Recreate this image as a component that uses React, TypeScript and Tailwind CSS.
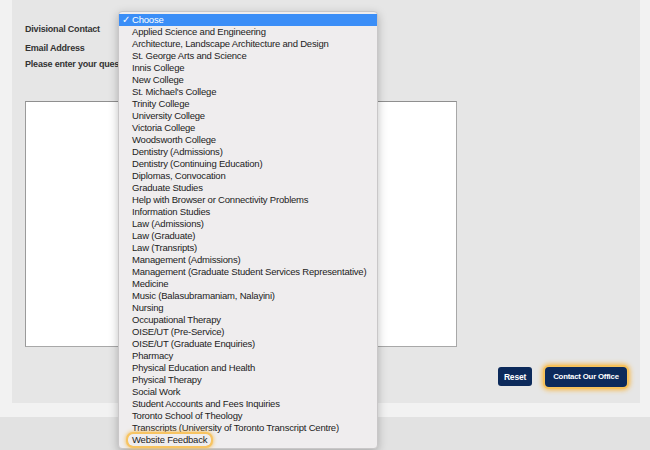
import React from "react";

const options = [
  "Applied Science and Engineering",
  "Architecture, Landscape Architecture and Design",
  "St. George Arts and Science",
  "Innis College",
  "New College",
  "St. Michael's College",
  "Trinity College",
  "University College",
  "Victoria College",
  "Woodsworth College",
  "Dentistry (Admissions)",
  "Dentistry (Continuing Education)",
  "Diplomas, Convocation",
  "Graduate Studies",
  "Help with Browser or Connectivity Problems",
  "Information Studies",
  "Law (Admissions)",
  "Law (Graduate)",
  "Law (Transripts)",
  "Management (Admissions)",
  "Management (Graduate Student Services Representative)",
  "Medicine",
  "Music (Balasubramaniam, Nalayini)",
  "Nursing",
  "Occupational Therapy",
  "OISE/UT (Pre-Service)",
  "OISE/UT (Graduate Enquiries)",
  "Pharmacy",
  "Physical Education and Health",
  "Physical Therapy",
  "Social Work",
  "Student Accounts and Fees Inquiries",
  "Toronto School of Theology",
  "Transcripts (University of Toronto Transcript Centre)",
];

function Dropdown() {
  return (
    <div className="absolute left-[118px] top-[11px] w-[260px] whitespace-nowrap rounded-[4px] border border-[#c9c7c8] bg-[#efedee] py-[2px] text-[9.5px] tracking-[-0.2px] shadow-[0_3px_10px_rgba(0,0,0,0.25)]">
      <div className="flex h-[12px] items-center bg-[#3b8ef7] text-white">
        <span className="w-[13px] pl-[3px] text-[10px] leading-none">✓</span>
        <span>Choose</span>
      </div>
      {options.map((o) => (
        <div key={o} className="flex h-[12px] items-center pl-[13px] text-[#222]">
          {o}
        </div>
      ))}
      <div className="flex h-[12px] items-center pl-[9px]">
        <span className="rounded-[5px] px-[4px] leading-[12px] text-[#222] shadow-[0_0_0_2px_#f7c462,0_0_4px_2px_#f5b948]">
          Website Feedback
        </span>
      </div>
    </div>
  );
}

export default function App() {
  return (
    <div
      className="relative h-[450px] w-[650px] overflow-hidden bg-[#f2f2f2]"
      style={{ fontFamily: '"Liberation Sans", Arial, sans-serif' }}
    >
      <div className="ml-[12px] flex h-[403px] w-[628px] flex-col bg-[#e6e6e6] pl-[13px] text-[9px] font-bold leading-[12px] tracking-[-0.2px] text-[#333]">
        <div className="mt-[23px]">Divisional Contact</div>
        <div className="mt-[7px]">Email Address</div>
        <div className="mt-[4px]">Please enter your question</div>
        <div className="mt-[31px] h-[246px] w-[432px] border border-[#a8a8a8] border-t-[#8f8f8f] border-l-[#9a9a9a] bg-white" />
        <div className="mt-[20px] flex items-start justify-end gap-[13px] pr-[13px]">
          <button className="h-[19px] w-[34px] rounded-[3px] bg-[#0c2a5b] text-[8.5px] font-bold tracking-[-0.2px] text-white">
            Reset
          </button>
          <button className="h-[20px] w-[82px] rounded-[4px] bg-[#0c2a5b] text-[7.8px] font-bold tracking-[-0.2px] text-white shadow-[0_0_0_2px_#f6c25c,0_0_5px_3px_#f7b847]">
            Contact Our Office
          </button>
        </div>
      </div>
      <div className="mt-[14px] h-[33px] bg-[#e2e2e2]" />
      <Dropdown />
    </div>
  );
}
